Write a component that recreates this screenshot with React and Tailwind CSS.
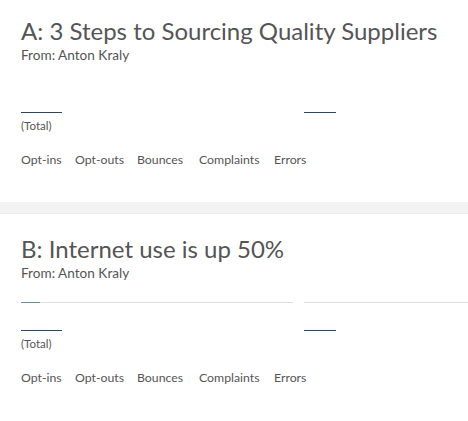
import React from 'react';

const tabs = [
  { label: 'Opt-ins', w: 'w-[54px]' },
  { label: 'Opt-outs', w: 'w-[62px]' },
  { label: 'Bounces', w: 'w-[62px]' },
  { label: 'Complaints', w: 'w-[75px]' },
  { label: 'Errors', w: 'w-[50px]' },
];

const variants = [
  { id: 'A', subject: '3 Steps to Sourcing Quality Suppliers', from: 'Anton Kraly', progress: false },
  { id: 'B', subject: 'Internet use is up 50%', from: 'Anton Kraly', progress: true },
];

function Card({ v, top, height }) {
  return (
    <div className={`bg-white pl-[21px] shadow-[0_1px_1px_rgba(0,0,0,0.35)] ${top} ${height}`}>
      <h2 className="text-[24px] leading-[28px] text-[#555]">
        {v.id}: {v.subject}
      </h2>
      <p className="mt-[2px] text-[13.6px] leading-[16px] text-[#555]">From: {v.from}</p>

      {/* open-rate bars */}
      <div className="mt-[16px] h-[10px] flex items-center">
        {v.progress && (
          <>
            <div className="w-[272px] h-px bg-[#ddd] flex">
              <div className="w-[19px] h-px bg-[#6b8aa6]" />
            </div>
            <div className="ml-[11px] flex-1 h-px bg-[#ddd]" />
          </>
        )}
      </div>

      <div className="mt-[22px] flex items-center h-[2px]">
        <div className="w-[41px] h-px bg-[#2c4766]" />
        <div className="ml-[242px] w-[32px] h-px bg-[#2c4766]" />
      </div>
      <p className="mt-[6px] text-[11.5px] leading-[14px] text-[#555]">(Total)</p>

      <div className="mt-[20px] flex text-[12.3px] leading-[14px] text-[#555]">
        {tabs.map((t) => (
          <span key={t.label} className={t.w}>{t.label}</span>
        ))}
      </div>
    </div>
  );
}

export default function App() {
  return (
    <div className="w-[468px] h-[421px] overflow-hidden bg-white" style={{ fontFamily: 'Lato, "Open Sans", sans-serif' }}>
      <Card v={variants[0]} top="pt-[17px]" height="h-[202px]" />
      <div className="h-[12px] bg-[#f3f3f3] border-b border-[#ececec]" />
      <Card v={variants[1]} top="pt-[21px]" height="h-[240px]" />
    </div>
  );
}
